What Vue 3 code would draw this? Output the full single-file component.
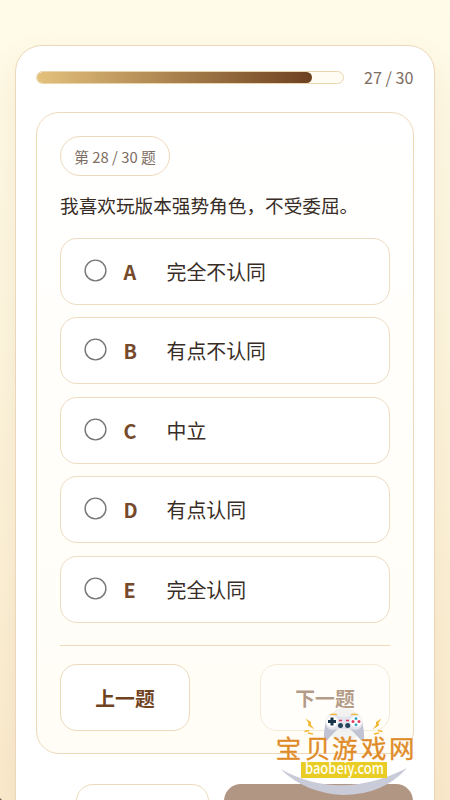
<script setup>
const total = 30
const answered = 27
const options = [
  { key: 'A', label: '完全不认同' },
  { key: 'B', label: '有点不认同' },
  { key: 'C', label: '中立' },
  { key: 'D', label: '有点认同' },
  { key: 'E', label: '完全认同' },
]
</script>

<template>
  <div class="page">
    <main class="shell">
      <header class="top">
        <div class="track"><div class="fill" :style="{ width: (answered / total) * 100 + '%' }"></div></div>
        <span class="count">{{ answered }} / {{ total }}</span>
      </header>
      <section class="card">
        <div class="pill">第 {{ answered + 1 }} / {{ total }} 题</div>
        <h1 class="question">我喜欢玩版本强势角色，不受委屈。</h1>
        <div class="options">
          <label v-for="o in options" :key="o.key" class="option">
            <svg class="radio" viewBox="0 0 23 23"><circle cx="11.500" cy="11.500" r="10.400" /></svg>
            <b class="key">{{ o.key }}</b>
            <span class="label">{{ o.label }}</span>
          </label>
        </div>
        <div class="nav">
          <button class="btn">上一题</button>
          <button class="btn disabled">下一题</button>
        </div>
      </section>
      <footer class="bottom">
        <div class="ghost"></div>
        <div class="solid"></div>
      </footer>
    </main>
    <svg class="mark" viewBox="265 705 155 95" width="155" height="95">
      <circle cx="344" cy="725" r="17" fill="#ededee" opacity=".75" />
      <path d="M280.500 769Q340 802 407 768Q383 795 343 795Q305 793 280.500 769Z" fill="#cacbd8" />
      <path d="M305.500 718.500L311 722L311 725L314.500 729.500L308 725.500L308.500 723ZM381.500 718.500L376 722L376 725L372.500 729.500L379 725.500L378.500 723Z" fill="#f2b735" />
      <g fill="none" stroke="#f2b735" stroke-width="1.5">
        <path d="M304.500 731.500L309 730.500M308 733L313 734M382.500 731.500L378 730.500M379 733L374 734" />
        <path d="M330 715.200Q333 713.500 337 714.800M351 714.800Q355 713.500 358 715.200" />
      </g>
      <path d="M326 721Q323.500 732 324 739Q326 743 329 738L336.500 730Q337.500 728.500 340 728.500H348Q350.500 728.500 351.500 730L359 738Q362 743 364 739Q364.500 732 362 721Z" fill="#c1c2d2" />
      <path d="M325.500 723Q325.500 715.500 332 715Q338 714.500 340 716.500H348Q350 714.500 356 715Q362.500 715.500 362.500 723Q362 730 355 730L349 728.500H339L333 730Q326 730 325.500 723Z" fill="#e4e4ef" />
      <circle cx="332" cy="721.500" r="5.700" fill="#fff" />
      <circle cx="356" cy="721.500" r="5.700" fill="#fff" />
      <path d="M332 717.500V725.500M328 721.500H336" stroke="#17334a" stroke-width="3" />
      <circle cx="340.500" cy="725.500" r="2.500" fill="#24445a" />
      <circle cx="347.700" cy="725.500" r="2.500" fill="#24445a" />
      <path d="M339 720.500H342M346 720.500H349" stroke="#d63b61" stroke-width="1.300" />
      <circle cx="356" cy="718.500" r="1.500" fill="#38a9c6" />
      <circle cx="356" cy="724.700" r="1.500" fill="#38a9c6" />
      <circle cx="353" cy="721.600" r="1.500" fill="#dd3c5a" />
      <circle cx="359" cy="721.600" r="1.500" fill="#dd3c5a" />
      <text class="brand" x="275.800 305 332 361 389" y="758.300">宝贝游戏网</text>
      <rect x="301" y="762" width="86" height="16" fill="#e9cd24" />
      <text class="domain" x="344.500" y="774" text-anchor="middle" textLength="79" lengthAdjust="spacingAndGlyphs">baobeiy.com</text>
    </svg>
    <i class="corner"></i>
  </div>
</template>

<style>
body { margin: 0; overflow: hidden; }
</style>

<style scoped>
* { box-sizing: border-box; }
.page {
  position: relative;
  height: 800px;
  overflow: hidden;
  padding: 45px 15px 0;
  background: linear-gradient(180deg, #fffbe8 0%, #fdf5de 45%, #fbebcd 100%);
  font-family: "Noto Sans CJK SC", sans-serif;
  color: #382d26;
}
.shell {
  height: 850px;
  padding: 25px 20px 0;
  background: #fff;
  border: 1px solid #ecd7ba;
  border-radius: 27px;
  box-shadow: 0 16px 34px rgba(130, 85, 35, .09);
}
.top {
  display: flex;
  align-items: center;
  justify-content: space-between;
  height: 13px;
}
.track {
  width: 308px;
  height: 13px;
  border: 1px solid #ead5ae;
  border-radius: 7px;
  background: #fffdf3;
  overflow: hidden;
}
.fill {
  height: 100%;
  border-radius: 7px;
  background: linear-gradient(90deg, #e4c17c, #6d4120);
}
.count { margin-right: .5px; margin-top: -1px; font-size: 16.200px; line-height: 24px; color: #7d6d62; white-space: nowrap; }
.card {
  height: 642px;
  margin-top: 28px;
  padding: 23px 23px 0;
  border: 1px solid #eddabb;
  border-radius: 23px;
  background: linear-gradient(180deg, #fff, #fffdf5);
}
.pill {
  display: inline-flex;
  align-items: center;
  justify-content: center;
  width: 110px;
  height: 40px;
  border: 1px solid #eddabb;
  border-radius: 20px;
  background: #fff;
  color: #7d6d62;
  font-size: 14.800px;
  white-space: nowrap;
  vertical-align: top;
}
.question { margin: 13px 0 0; font-size: 18.650px; line-height: 32px; font-weight: 400; white-space: nowrap; }
.options { display: grid; gap: 12.400px; margin-top: 17px; }
.option {
  display: flex;
  align-items: center;
  height: 67px;
  padding-left: 22.500px;
  border: 1px solid #eedcc1;
  border-radius: 17px;
  background: #fff;
}
.radio { width: 23px; height: 23px; margin-top: -2px; fill: #fff; stroke: #777; stroke-width: 1.400px; }
.key { width: 43px; margin-left: 17px; font-size: 19.800px; font-weight: 700; color: #75492a; }
.label { font-size: 19.900px; }
.nav {
  display: flex;
  justify-content: space-between;
  margin-top: 22px;
  padding-top: 18px;
  border-top: 1px solid #eddabb;
}
.btn {
  width: 130px;
  height: 67px;
  padding: 0;
  border: 1px solid #eddabb;
  border-radius: 17px;
  background: #fff;
  color: #70431f;
  font: 700 19.800px "Noto Sans CJK SC", sans-serif;
}
.disabled { opacity: .52; }
.bottom { display: flex; gap: 15px; margin-top: 30px; padding-left: 40px; }
.ghost { width: 133px; height: 67px; border: 1px solid #eddabb; border-radius: 17px; }
.solid { width: 189px; height: 67px; border-radius: 17px; background: #b19683; }
.mark { position: absolute; left: 265px; top: 705px; }
.brand { font-size: 25.500px; font-weight: 400; fill: #df8b27; stroke: #df8b27; stroke-width: .3px; }
.domain { font-size: 15.200px; font-weight: 500; fill: #fffdf1; }
.corner { position: absolute; left: 0; bottom: 0; width: 2px; height: 2px; background: #6d665b; clip-path: polygon(0 0, 100% 100%, 0 100%); }
</style>
